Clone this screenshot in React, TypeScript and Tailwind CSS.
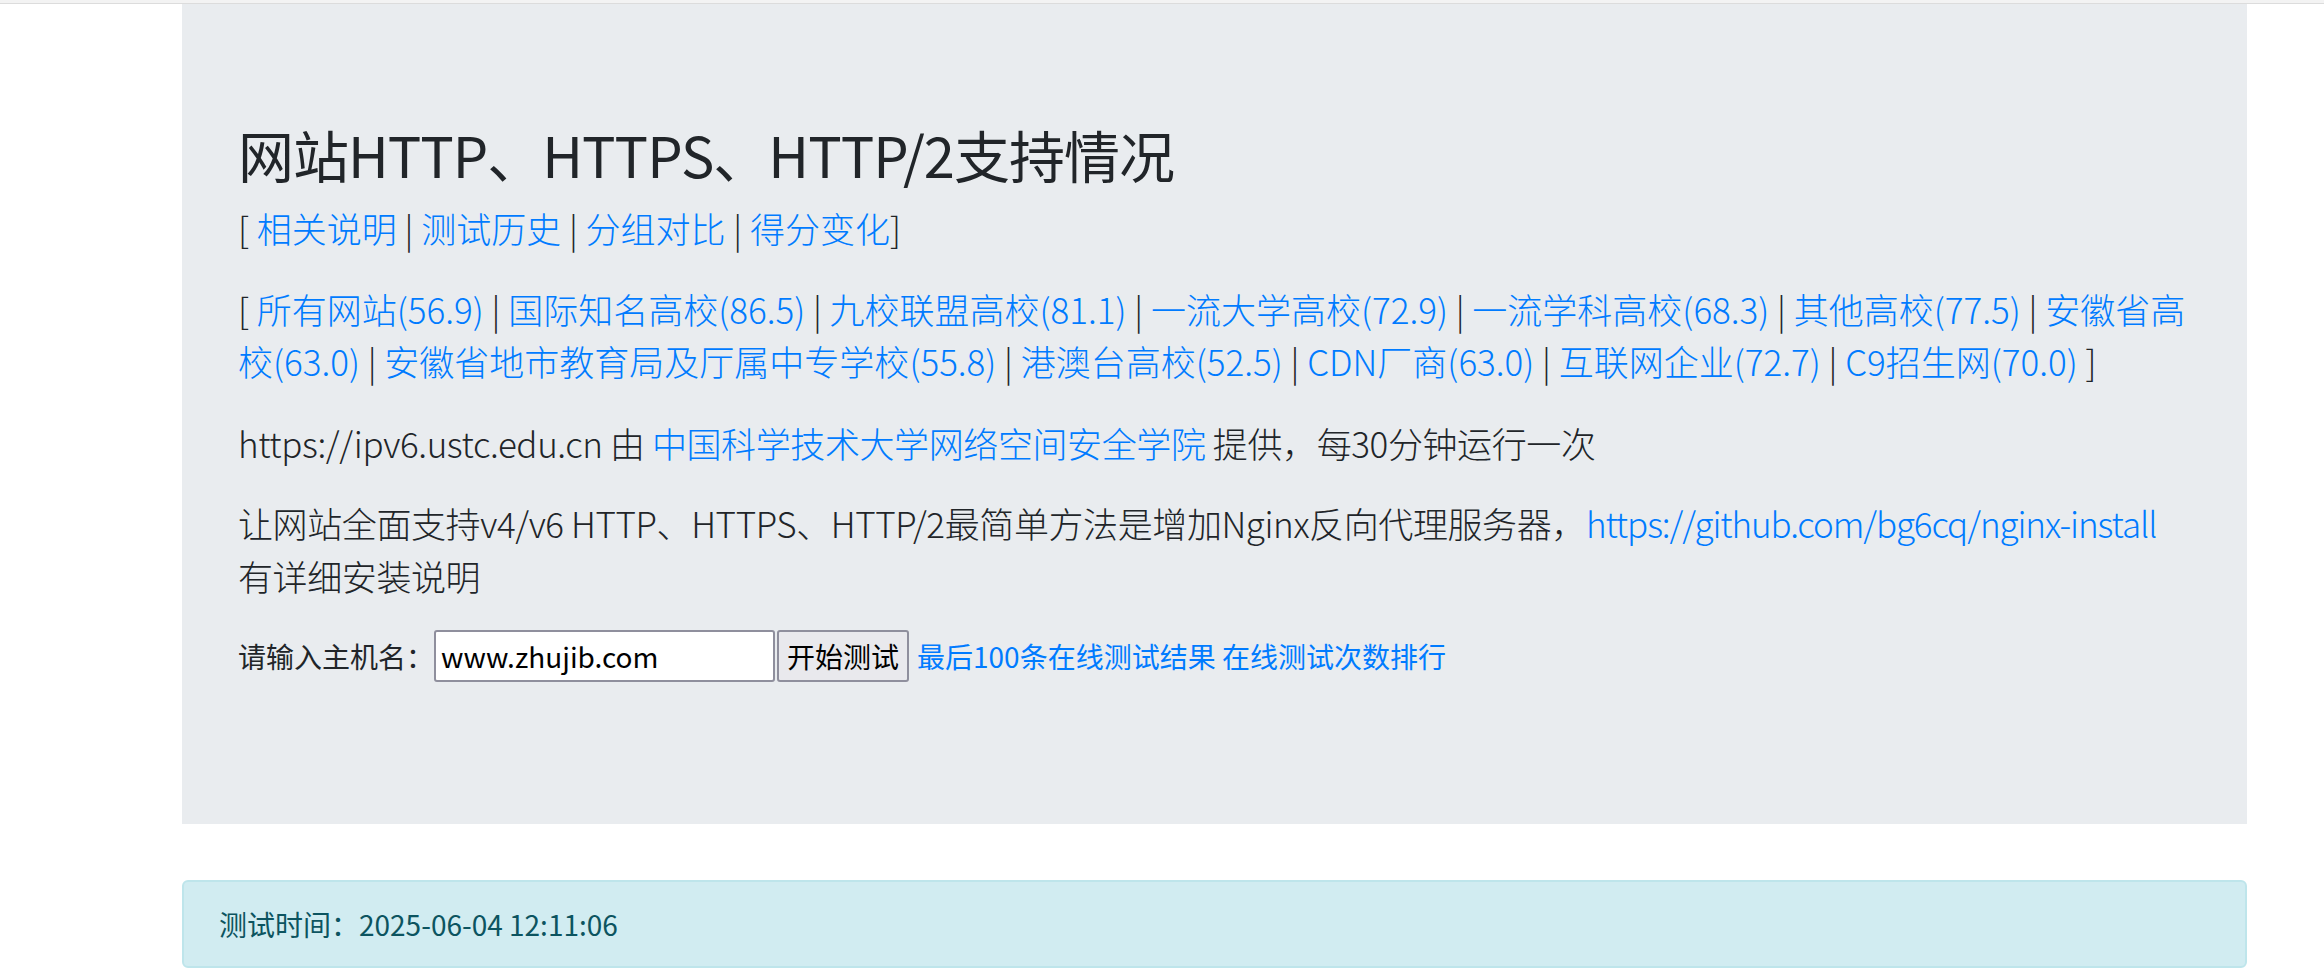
import React from "react";

const Sep = () => <span className="text-[#212529]"> | </span>;

const A = ({ children, className = "" }: { children: React.ReactNode; className?: string }) => (
  <a href="#" className={"text-[#007bff] no-underline " + className}>
    {children}
  </a>
);

export default function App() {
  const groups: [string, string][] = [
    ["所有网站", "56.9"],
    ["国际知名高校", "86.5"],
    ["九校联盟高校", "81.1"],
    ["一流大学高校", "72.9"],
    ["一流学科高校", "68.3"],
    ["其他高校", "77.5"],
  ];
  const groups2: [string, string][] = [
    ["安徽省地市教育局及厅属中专学校", "55.8"],
    ["港澳台高校", "52.5"],
    ["CDN厂商", "63.0"],
    ["互联网企业", "72.7"],
    ["C9招生网", "70.0"],
  ];
  return (
    <div className="min-h-screen bg-white text-[#212529] font-['Noto_Sans_CJK_SC',sans-serif]">
      <div className="h-[4px] bg-[#f3f3f3] border-b border-[#dcdcdc]" />
      <div className="ml-[182px] w-[2065px]">
        <div className="bg-[#e9ecef] px-[56px] pt-[116px] pb-[114px] mb-[56px]">
          <h2 className="text-[56px] leading-[1.2] font-normal tracking-[-1px] mb-[15px]">
            网站HTTP、HTTPS、HTTP/2支持情况
          </h2>
          <p className="text-[35px] leading-[1.5] font-light mb-[28px]">
            [ <A>相关说明</A>
            <Sep />
            <A>测试历史</A>
            <Sep />
            <A>分组对比</A>
            <Sep />
            <A>得分变化</A>]
          </p>
          <p className="text-[35px] leading-[1.5] font-light mb-[29px]">
            [{" "}
            {groups.map(([n, v], i) => (
              <React.Fragment key={n}>
                {i > 0 && <Sep />}
                <A>
                  {n}({v})
                </A>
              </React.Fragment>
            ))}
            <Sep />
            <A>
              安徽省高
              <br />
              校(63.0)
            </A>
            {groups2.map(([n, v]) => (
              <React.Fragment key={n}>
                <Sep />
                <A>
                  {n}({v})
                </A>
              </React.Fragment>
            ))}{" "}
            ]
          </p>
          <p className="text-[35px] leading-[1.5] font-light tracking-[-0.4px] mb-[28px]">
            https://ipv6.ustc.edu.cn 由 <A>中国科学技术大学网络空间安全学院</A> 提供，每30分钟运行一次
          </p>
          <p className="text-[35px] leading-[1.5] font-light tracking-[-0.4px] mb-[28px]">
            让网站全面支持v4/v6 HTTP、HTTPS、HTTP/2最简单方法是增加Nginx反向代理服务器，
            <A className="whitespace-nowrap tracking-[-1.1px]">https://github.com/bg6cq/nginx-install</A>
            <br />
            有详细安装说明
          </p>
          <form className="flex items-center h-[52px] mb-[28px] text-[28px] leading-[1.5]">
            <span className="whitespace-nowrap">请输入主机名：</span>
            <input
              type="text"
              defaultValue="www.zhujib.com"
              className="h-[52px] w-[341px] shrink-0 bg-white border-2 border-[#8f8f9d] rounded-[3px] px-[5px] text-[28px] text-black outline-none"
            />
            <button
              type="button"
              className="h-[52px] shrink-0 ml-[2px] px-[8px] bg-[#e9e9ed] border-2 border-[#8f8f9d] rounded-[3px] text-[28px] leading-none text-black whitespace-nowrap"
            >
              开始测试
            </button>
            <span className="ml-[8px] whitespace-nowrap">
              <A>最后100条在线测试结果</A> <A>在线测试次数排行</A>
            </span>
          </form>
        </div>
        <div className="bg-[#d1ecf1] border-2 border-[#bee5eb] rounded-[6px] px-[35px] py-[21px] text-[28px] leading-[1.5] text-[#0c5460]">
          测试时间：2025-06-04 12:11:06
        </div>
      </div>
    </div>
  );
}
